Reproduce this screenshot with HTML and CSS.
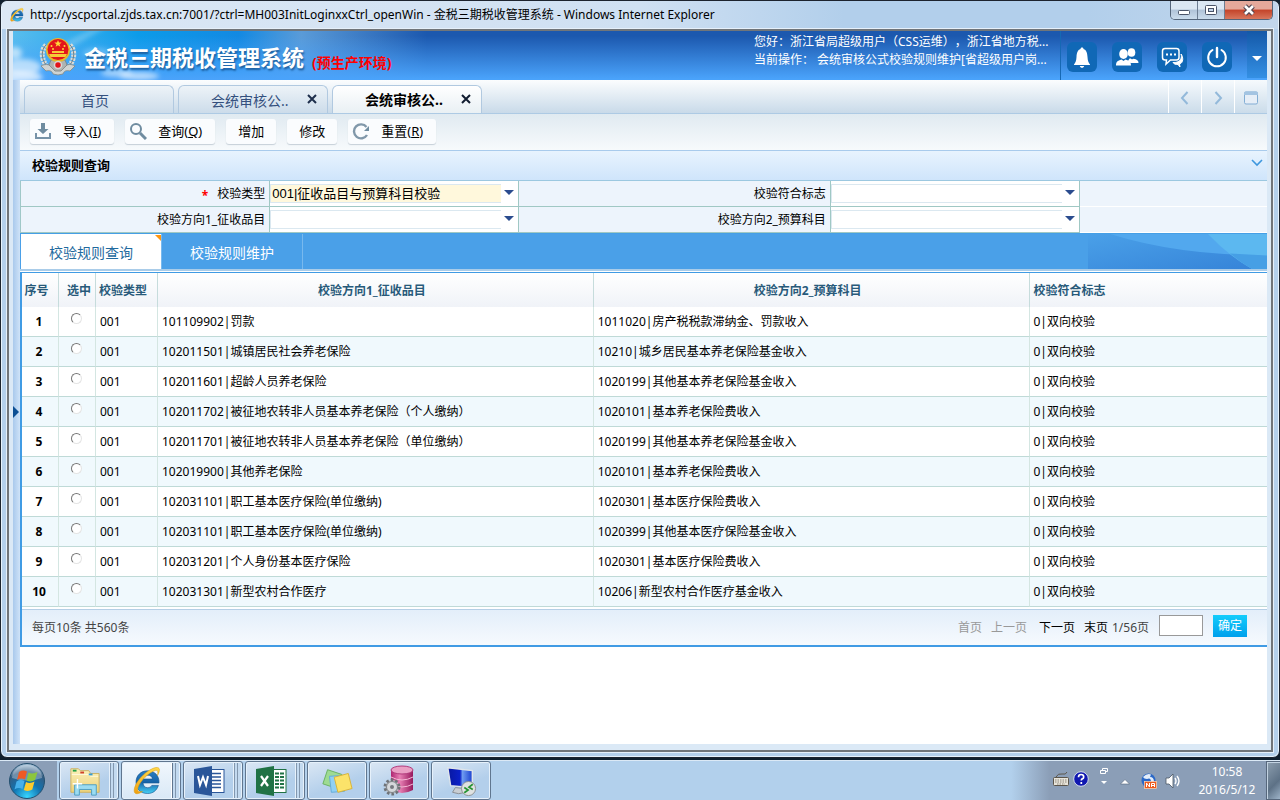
FILE: index.html
```html
<!DOCTYPE html>
<html lang="zh-CN">
<head>
<meta charset="utf-8">
<title>金税三期税收管理系统</title>
<link rel="stylesheet" href="styles.css">
</head>
<body>
<svg class="defs" aria-hidden="true">
  <defs>
    <linearGradient id="ieBlue" x1="0" y1="0" x2="0" y2="1"><stop offset="0" stop-color="#2a7fc4"/><stop offset=".5" stop-color="#1663a8"/><stop offset="1" stop-color="#45d0f5"/></linearGradient>
    <linearGradient id="gold" x1="0" y1="0" x2="0" y2="1"><stop offset="0" stop-color="#ffd94a"/><stop offset="1" stop-color="#f0a010"/></linearGradient>
    <radialGradient id="orb" cx=".5" cy=".95" r=".9"><stop offset="0" stop-color="#37d6ff"/><stop offset=".45" stop-color="#1173b0"/><stop offset=".8" stop-color="#345d83"/><stop offset="1" stop-color="#9db9d1"/></radialGradient>
    <linearGradient id="folder" x1="0" y1="0" x2="0" y2="1"><stop offset="0" stop-color="#fbf0b8"/><stop offset="1" stop-color="#ecd27c"/></linearGradient>
    <linearGradient id="pink" x1="0" y1="0" x2="1" y2="0"><stop offset="0" stop-color="#b02470"/><stop offset=".4" stop-color="#e880b4"/><stop offset="1" stop-color="#96185c"/></linearGradient>
    <linearGradient id="screen" x1="0" y1="0" x2="1" y2="0"><stop offset="0" stop-color="#0818a0"/><stop offset=".5" stop-color="#0a20c8"/><stop offset=".6" stop-color="#6e9bf0"/><stop offset="1" stop-color="#1a40d0"/></linearGradient>
    <symbol id="ie" viewBox="0 0 32 32">
      <path d="M28 18H12c.3 3 2 4.700 4.600 4.700 2 0 3.400-.8 4.200-2.300h6.600C25.800 25.500 22 28.500 16.500 28.500 9.500 28.500 5 24 5 17.200 5 10.500 9.800 5.800 16.600 5.800S28.500 10.500 28 18zM12.200 14h9.300c-.4-2.400-2-3.800-4.600-3.800S12.700 11.600 12.200 14z" fill="url(#ieBlue)" stroke="#0f4f8c" stroke-width=".6"/>
      <path d="M26.500 10.500C29.500 5 29 2 25 2.500 18 3.500 6 14 3.500 23c-1.500 6 2 7.500 8 3.500-4 1-5.500-.5-4.500-4C9 16 18 7.500 24 5.500c2.500-.8 3.500 1 2.500 5z" fill="url(#gold)" stroke="#d99a12" stroke-width=".5"/>
    </symbol>
  </defs>
</svg>

<div class="window">
  <header class="titlebar">
    <svg class="titlebar-icon" aria-hidden="true"><use href="#ie"/></svg>
    <span class="titlebar-text">http://yscportal.zjds.tax.cn:7001/?ctrl=MH003InitLoginxxCtrl_openWin - 金税三期税收管理系统 - Windows Internet Explorer</span>
    <div class="win-controls">
      <button class="win-btn" aria-label="最小化"><svg viewBox="0 0 14 12"><rect x="1.500" y="6.500" width="11" height="4" rx="1" fill="#fff" stroke="#4b5468"/></svg></button>
      <button class="win-btn" aria-label="还原"><svg viewBox="0 0 14 12"><rect x="1.500" y="1.500" width="11" height="9" rx="1" fill="#fff" stroke="#4b5468"/><rect x="4.500" y="4.500" width="5" height="3" fill="#c4d5ea" stroke="#4b5468"/></svg></button>
      <button class="win-btn win-btn-close" aria-label="关闭"><svg viewBox="0 0 14 12"><path d="M3 2l8 8M11 2l-8 8" stroke="#50444e" stroke-width="5"/><path d="M3 2l8 8M11 2l-8 8" stroke="#fff" stroke-width="2.600"/></svg></button>
    </div>
  </header>

  <div class="client">
    <div class="app">
      <div class="banner">
        <svg class="clouds" viewBox="0 0 180 49" aria-hidden="true">
          <defs><filter id="soft"><feGaussianBlur stdDeviation="2.500"/></filter></defs>
          <g fill="#fff" filter="url(#soft)">
            <ellipse cx="2" cy="22" rx="7" ry="6" opacity=".6"/>
            <ellipse cx="10" cy="36" rx="18" ry="8" opacity=".6"/>
            <ellipse cx="4" cy="46" rx="26" ry="6" opacity=".7"/>
            <ellipse cx="66" cy="8" rx="34" ry="3" opacity=".25" transform="rotate(-28 66 8)"/>
            <ellipse cx="104" cy="42" rx="16" ry="4" opacity=".5"/>
            <ellipse cx="126" cy="45" rx="20" ry="4" opacity=".6"/>
            <ellipse cx="84" cy="22" rx="14" ry="5" opacity=".25"/>
          </g>
        </svg>
        <svg class="emblem" viewBox="0 0 38 40" aria-hidden="true">
          <path d="M7 9C2 14 2 22 7 29M31 9c5 5 5 13 0 20" fill="none" stroke="#d9dcda" stroke-width="5" stroke-dasharray="2.500 1"/>
          <path d="M7 9C2 14 2 22 7 29M31 9c5 5 5 13 0 20" fill="none" stroke="#777c7c" stroke-width="1"/>
          <path d="M2 30c5-3 10-1 13 2h8c3-3 8-5 13-2l-5 5c-4-1-6 0-7 3l-5 1-5-1c-1-3-3-4-7-3z" fill="#cfd3d2" stroke="#808887" stroke-width=".8"/>
          <path d="M12 24h14l2 5-6 6h-6l-6-6z" fill="#aeb3b2" stroke="#7c8281" stroke-width=".8"/>
          <circle cx="19" cy="14" r="12" fill="#e5b92c"/><circle cx="19" cy="13.500" r="10.500" fill="#e3151b"/>
          <path d="M19 4l1 2.600h2.700l-2.200 1.600.9 2.600L19 9.200l-2.400 1.600.9-2.600-2.200-1.600H18z" fill="#ffd83a"/>
          <path d="M10 18h18l-1.500 3h-15zM13 15h12v2H13z" fill="#f6cb38"/>
          <g fill="#ffd83a"><circle cx="12.500" cy="10" r="1"/><circle cx="14" cy="13" r="1"/><circle cx="25.500" cy="10" r="1"/><circle cx="24" cy="13" r="1"/></g>
          <circle cx="19" cy="29" r="3.500" fill="#e3151b" stroke="#d8d8d4" stroke-width="1.500"/>
        </svg>
        <h1 class="banner-title">金税三期税收管理系统</h1>
        <span class="banner-env">(预生产环境)</span>
        <div class="banner-user">
          <div>您好：浙江省局超级用户（CSS运维），浙江省地方税...</div>
          <div>当前操作： 会统审核公式校验规则维护[省超级用户岗...</div>
        </div>
        <div class="banner-actions">
          <button class="banner-btn" aria-label="通知"><svg viewBox="0 0 30 30"><path d="M15 5.500c1 0 1.500.7 1.500 1.500 3 1 3.800 4 4 8 .2 4 1 5.500 2.500 7.500v.5H7v-.5C8.500 20.500 9.300 19 9.500 15c.2-4 1-7 4-8 0-.8.5-1.500 1.500-1.500zM12.800 24h4.400c-.3 1.200-1.100 1.800-2.200 1.800s-1.900-.6-2.200-1.800z" fill="#fff"/></svg></button>
          <button class="banner-btn" aria-label="用户"><svg viewBox="0 0 30 30" fill="#fff"><ellipse cx="19.500" cy="10.500" rx="3.800" ry="4.300"/><path d="M16 19l1.500-2.500c2-.5 2 1.500 4 .3 3.500.7 5 1.700 5 4.200h-8z"/><ellipse cx="11.500" cy="12" rx="4.300" ry="5" /><path d="M4 23.500c0-3.800 1.500-4.800 5.500-6l2 1.500 2-1.500c4 1.200 5.500 2.200 5.500 6z"/></svg></button>
          <button class="banner-btn" aria-label="消息"><svg viewBox="0 0 30 30"><path d="M8 6.500h11.500q2.500 0 2.500 2.500v6.500q0 2.500-2.500 2.500h-6L9 22l.5-4H8q-2.500 0-2.500-2.500V9q0-2.500 2.500-2.500z" fill="none" stroke="#fff" stroke-width="1.500"/><path d="M9 12.500h2M13 12.500h2M17 12.500h2" stroke="#fff" stroke-width="2"/><path d="M24 12c1 3 .5 9-8 8.500 1 1.800 3 2 5 2l2 2.500-.5-3c4-1 4-7 1.500-10z" fill="#fff" stroke="#fff"/></svg></button>
          <button class="banner-btn" aria-label="退出"><svg viewBox="0 0 30 30" fill="none" stroke="#fff" stroke-linecap="round"><path d="M10.500 8A8.800 8.800 0 1 0 19.500 8" stroke-width="2"/><path d="M15 6v9" stroke-width="2.400"/></svg></button>
          <button class="banner-more" aria-label="更多"><svg viewBox="0 0 10 6"><path d="M0 0h10L5 5z" fill="#fff"/></svg></button>
        </div>
      </div>

      <div class="workspace">
        <aside class="side-strip"><button class="side-toggle" aria-label="展开菜单"><svg viewBox="0 0 6 14"><path d="M0 1l6 6-6 6z" fill="#0c4f94"/></svg></button></aside>
        <main class="page">
          <nav class="tabbar">
            <div class="tab"><a href="#" class="tab-name">首页</a></div>
            <div class="tab tab-closable"><a href="#" class="tab-name">会统审核公..</a><button class="tab-close" aria-label="关闭标签"><svg viewBox="0 0 10 10"><path d="M1 1l8 8M9 1L1 9" stroke="#1e2f4c" stroke-width="2"/></svg></button></div>
            <div class="tab tab-closable tab-active"><a href="#" class="tab-name">会统审核公..</a><button class="tab-close" aria-label="关闭标签"><svg viewBox="0 0 10 10"><path d="M1 1l8 8M9 1L1 9" stroke="#111d30" stroke-width="2"/></svg></button></div>
            <div class="tabbar-tools">
              <button class="tabbar-tool" aria-label="上一个"><svg viewBox="0 0 16 16"><path d="M10.500 2L5 8l5.500 6" fill="none" stroke="#93b9da" stroke-width="2"/></svg></button>
              <button class="tabbar-tool" aria-label="下一个"><svg viewBox="0 0 16 16"><path d="M5.500 2L11 8l-5.500 6" fill="none" stroke="#93b9da" stroke-width="2"/></svg></button>
              <button class="tabbar-tool" aria-label="窗口"><svg viewBox="0 0 16 16"><rect x="1.500" y="2" width="13" height="12" rx="1.500" fill="#e6eef7" stroke="#82add4"/><path d="M1 5V3q0-1.500 1.500-1.500h11Q15 1.500 15 3v2z" fill="#a3c4e2"/></svg></button>
            </div>
          </nav>

          <div class="toolbar">
            <button class="tool"><svg viewBox="0 0 18 18"><path d="M7 1h4v6h3.500L9 12 3.500 7H7z" fill="#6f8ca0"/><path d="M2 11v5h14v-5" fill="none" stroke="#7793a8" stroke-width="2"/></svg><span>导入(<u>I</u>)</span></button>
            <button class="tool"><svg viewBox="0 0 18 18"><circle cx="7" cy="7" r="5" fill="none" stroke="#6f8ca0" stroke-width="2"/><path d="M11 11l6 6" stroke="#6f8ca0" stroke-width="3"/></svg><span>查询(<u>Q</u>)</span></button>
            <button class="tool tool-plain"><span>增加</span></button>
            <button class="tool tool-plain"><span>修改</span></button>
            <button class="tool"><svg viewBox="0 0 18 18"><path d="M14.500 5A7 7 0 1 0 15 13" fill="none" stroke="#8198aa" stroke-width="2.400"/><path d="M17 4v5h-5z" fill="#6f8ca0"/></svg><span>重置(<u>R</u>)</span></button>
          </div>

          <section class="query">
            <div class="query-head"><h2 class="query-title">校验规则查询</h2><button class="query-fold" aria-label="折叠"><svg viewBox="0 0 12 8"><path d="M1 1l5 5 5-5" fill="none" stroke="#3e97de" stroke-width="1.600"/></svg></button></div>
            <form class="query-form">
              <label class="field-name" for="type"><span class="required">*</span>校验类型</label>
              <div class="field"><select id="type" class="picker picker-filled"><option>001|征收品目与预算科目校验</option></select></div>
              <label class="field-name" for="flag">校验符合标志</label>
              <div class="field"><select id="flag" class="picker"><option></option></select></div>
              <div class="field-rest"></div>
              <label class="field-name" for="dir1">校验方向1_征收品目</label>
              <div class="field"><select id="dir1" class="picker"><option></option></select></div>
              <label class="field-name" for="dir2">校验方向2_预算科目</label>
              <div class="field"><select id="dir2" class="picker"><option></option></select></div>
              <div class="field-rest"></div>
            </form>
          </section>

          <nav class="subtabs">
            <a href="#" class="subtab subtab-active">校验规则查询</a>
            <a href="#" class="subtab">校验规则维护</a>
            <svg class="subtabs-art" viewBox="0 0 179 36" preserveAspectRatio="none" aria-hidden="true"><defs><linearGradient id="wave" x1="0" y1="0" x2="1" y2="1"><stop offset="0" stop-color="#4aa0e8"/><stop offset="1" stop-color="#3583d8"/></linearGradient></defs><rect width="179" height="36" fill="url(#wave)"/><path d="M22 0Q90 22 179 22V0z" fill="#52a8ee"/><path d="M120 0q20 22 44 36h15V0z" fill="#5cb8f0"/><path d="M142 20q10 9 22 16h15V22z" fill="#469fe5"/></svg>
          </nav>

          <section class="result">
            <table class="grid">
              <colgroup><col class="col-no"><col class="col-pick"><col class="col-type"><col class="col-dir"><col class="col-dir"><col></colgroup>
              <thead><tr><th>序号</th><th>选中</th><th>校验类型</th><th>校验方向1_征收品目</th><th>校验方向2_预算科目</th><th class="th-left">校验符合标志</th></tr></thead>
              <tbody>
                <tr><th>1</th><td><input type="radio" name="row" aria-label="第1行"></td><td>001</td><td>101109902|罚款</td><td>1011020|房产税税款滞纳金、罚款收入</td><td>0|双向校验</td></tr>
                <tr><th>2</th><td><input type="radio" name="row" aria-label="第2行"></td><td>001</td><td>102011501|城镇居民社会养老保险</td><td>10210|城乡居民基本养老保险基金收入</td><td>0|双向校验</td></tr>
                <tr><th>3</th><td><input type="radio" name="row" aria-label="第3行"></td><td>001</td><td>102011601|超龄人员养老保险</td><td>1020199|其他基本养老保险基金收入</td><td>0|双向校验</td></tr>
                <tr><th>4</th><td><input type="radio" name="row" aria-label="第4行"></td><td>001</td><td>102011702|被征地农转非人员基本养老保险（个人缴纳）</td><td>1020101|基本养老保险费收入</td><td>0|双向校验</td></tr>
                <tr><th>5</th><td><input type="radio" name="row" aria-label="第5行"></td><td>001</td><td>102011701|被征地农转非人员基本养老保险（单位缴纳）</td><td>1020199|其他基本养老保险基金收入</td><td>0|双向校验</td></tr>
                <tr><th>6</th><td><input type="radio" name="row" aria-label="第6行"></td><td>001</td><td>102019900|其他养老保险</td><td>1020101|基本养老保险费收入</td><td>0|双向校验</td></tr>
                <tr><th>7</th><td><input type="radio" name="row" aria-label="第7行"></td><td>001</td><td>102031101|职工基本医疗保险(单位缴纳)</td><td>1020301|基本医疗保险费收入</td><td>0|双向校验</td></tr>
                <tr><th>8</th><td><input type="radio" name="row" aria-label="第8行"></td><td>001</td><td>102031101|职工基本医疗保险(单位缴纳)</td><td>1020399|其他基本医疗保险基金收入</td><td>0|双向校验</td></tr>
                <tr><th>9</th><td><input type="radio" name="row" aria-label="第9行"></td><td>001</td><td>102031201|个人身份基本医疗保险</td><td>1020301|基本医疗保险费收入</td><td>0|双向校验</td></tr>
                <tr><th>10</th><td><input type="radio" name="row" aria-label="第10行"></td><td>001</td><td>102031301|新型农村合作医疗</td><td>10206|新型农村合作医疗基金收入</td><td>0|双向校验</td></tr>
              </tbody>
            </table>
            <footer class="pager">
              <span class="pager-total">每页10条 共560条</span>
              <a class="pager-link pager-off">首页</a>
              <a class="pager-link pager-off">上一页</a>
              <a href="#" class="pager-link pager-next">下一页</a>
              <a href="#" class="pager-link">末页</a>
              <label class="pager-pos" for="goto">1/56页</label>
              <input class="pager-input" id="goto" type="text">
              <button class="pager-go">确定</button>
            </footer>
          </section>
        </main>
      </div>
    </div>
  </div>
</div>

<footer class="taskbar">
  <div class="start-area"><button class="start" aria-label="开始"><svg viewBox="0 0 38 38"><circle cx="19" cy="19" r="17.500" fill="url(#orb)" stroke="#24506f"/><path d="M4 16a15 13 0 0 1 30 0q-15 5-30 0z" fill="#fff" opacity=".3"/><path d="M11 10q4-2.500 8-.5l-2 8q-4-2-8 .5z" fill="#ee5a24"/><path d="M20.500 10.500q4 2 9-.5l-2.500 8q-4 2.500-8.500.5z" fill="#8cc63e"/><path d="M8.500 19.500q4-2.500 8-.5l-2 8q-4-2-8 .5z" fill="#46b0ea"/><path d="M18 20q4 2 8.500-.5l-2.200 8q-4 2.500-8.500.5z" fill="#fccb2c"/></svg></button></div>
  <button class="task task-stack" aria-label="资源管理器"><svg viewBox="0 0 34 32"><path d="M2 7V3h8l2 2h9l2 3h9v20H2z" fill="url(#folder)" stroke="#cdb060"/><path d="M3 9h18l2 2h8" fill="none" stroke="#fffbe0"/><path d="M4 4h4v2H4z" fill="#25a045"/><path d="M12 6h4v2h-4z" fill="#d0402c"/><path d="M21 8h4v2h-4z" fill="#329bd6"/><path d="M6 31V20h23v11h-5v-6H11v6z" fill="#9bdcf2" stroke="#4c9cc0"/><path d="M9 14v10M4 19h10" stroke="#fff" stroke-width="1.500"/></svg></button>
  <button class="task task-stack task-current" aria-label="Internet Explorer"><svg><use href="#ie"/></svg></button>
  <button class="task task-stack" aria-label="Word"><svg viewBox="0 0 32 32"><rect x="14" y="4.500" width="17" height="23" fill="#fff" stroke="#2a5699"/><path d="M18 8.500h10M18 12h10M18 15.500h10M18 19h10M18 22.500h10" stroke="#2a5699" stroke-width="1.500"/><path d="M1 4l18-3v30L1 28z" fill="#2a5699"/><path d="M5 11l2 9 3-8 3 8 2-9" fill="none" stroke="#fff" stroke-width="2"/></svg></button>
  <button class="task task-stack" aria-label="Excel"><svg viewBox="0 0 32 32"><rect x="14" y="4.500" width="17" height="23" fill="#fff" stroke="#207245"/><path d="M20 8.500h9M20 12h9M20 15.500h9M20 19h9M20 22.500h9" stroke="#207245" stroke-width="2" stroke-dasharray="4 1"/><path d="M1 4l18-3v30L1 28z" fill="#207245"/><path d="M6 11l7 10M13 11L6 21" stroke="#fff" stroke-width="2.200"/></svg></button>
  <button class="task" aria-label="便笺"><svg viewBox="0 0 34 32"><path d="M7 4l15 5-5 15L2 19z" fill="#9edb92" stroke="#68b05e"/><path d="M9 11l15-1 1 17-14 1z" fill="#8fd0f4" stroke="#62aad6"/><path d="M14 12l15-4 4 16-15 4z" fill="#fbe36a" stroke="#d9b236"/></svg></button>
  <button class="task" aria-label="数据库工具"><svg viewBox="0 0 32 32"><path d="M8 5v20q11 6 22 0V5z" fill="url(#pink)"/><ellipse cx="19" cy="5" rx="11" ry="4" fill="#eaa0c4" stroke="#b23a7c"/><path d="M8 12q11 6 22 0M8 19q11 6 22 0" fill="none" stroke="#f4b8d4"/><circle cx="9" cy="22" r="7" fill="#bfc3c7" stroke="#6f7378" stroke-width="3" stroke-dasharray="2.500 2"/><circle cx="9" cy="22" r="5.500" fill="#d5d8db" stroke="#7f8388"/><circle cx="9" cy="22" r="2" fill="#757a80"/></svg></button>
  <button class="task" aria-label="远程桌面"><svg viewBox="0 0 34 32"><path d="M3 2l26 3v18L6 21z" fill="url(#screen)" stroke="#dfe5ea" stroke-width="1.500"/><path d="M11 23l9 1 2 4q-8 3-14 0z" fill="#c9ced3" stroke="#868c92"/><circle cx="25" cy="24" r="7.500" fill="#dfe2e2" stroke="#8b9090"/><path d="M20.500 23l4 2.500-4 3M29.500 19.500l-4 3 4 2.500" fill="none" stroke="#259332" stroke-width="1.800"/></svg></button>
  <div class="tray">
    <svg class="tray-icon" viewBox="0 0 16 16"><path d="M3 6q2-4 6-3t5-2" fill="none" stroke="#5c564c"/><rect x=".5" y="6.500" width="15" height="8" rx="1" fill="#e8e4da" stroke="#5c564c"/><path d="M2 9h12M2 11h12M4 13h8" stroke="#8a857a" stroke-dasharray="1.500 1"/></svg>
    <svg class="tray-icon" viewBox="0 0 16 16"><circle cx="8" cy="8" r="7.300" fill="#1018b0" stroke="#d3dcec"/><path d="M5.500 6.300q0-2.800 2.600-2.800t2.600 2.400q0 1.400-1.500 2-.9.400-.9 1.600M8.300 11v2" fill="none" stroke="#fff" stroke-width="1.700"/></svg>
    <svg class="tray-tall" viewBox="0 0 10 20"><path d="M3.500 3V1.500h5v3H7M1.500 3.500h5v3h-5z" fill="none" stroke="#fff"/><path d="M2 14h6l-3 3z" fill="#fff"/></svg>
    <svg class="tray-icon tray-low" viewBox="0 0 16 16"><path d="M3.500 11L8 6.500l4.500 4.500z" fill="#fff" stroke="#56677c" stroke-width=".6"/></svg>
    <svg class="tray-icon tray-low" viewBox="0 0 16 16"><circle cx="7.500" cy="7.500" r="7" fill="#2a68c8"/><path d="M2 4q4-4 8-2.500L9 4q4 0 4 5h-3q0-5-4-3-3 0-4-2z" fill="#e4eefa"/><rect x="3.500" y="8.500" width="12" height="7" fill="#ee5a1c" stroke="#ffd9b8" stroke-width=".7"/><path d="M5.500 14v-4l3 4v-4M10.500 14v-3.500h3V14M10.500 12.500h3" fill="none" stroke="#fff"/></svg>
    <svg class="tray-icon tray-low" viewBox="0 0 16 16"><path d="M1 5h3l4-4v14l-4-4H1z" fill="#fff" stroke="#4a5563" stroke-width=".8"/><path d="M10 5q2 3 0 6M12 3q4 5 0 10" fill="none" stroke="#fff" stroke-width="1.400"/></svg>
    <div class="clock"><div>10:58</div><div>2016/5/12</div></div>
  </div>
  <button class="show-desktop" aria-label="显示桌面"></button>
</footer>
</body>
</html>
```
FILE: styles.css
```css
* { box-sizing: border-box; }

body {
  margin: 0;
  min-height: 100vh;
  display: flex;
  flex-direction: column;
  background: #10202f;
  color: #000;
  font: 12px/18px "Noto Sans", "Noto Sans CJK SC", sans-serif;
  text-spacing-trim: space-all;
}

button {
  margin: 0;
  padding: 0;
  border: 0;
  background: none;
  color: inherit;
  font: inherit;
  display: flex;
  align-items: center;
  justify-content: center;
}

a { color: inherit; text-decoration: none; }
svg { display: block; flex: none; }
.defs { position: absolute; width: 0; height: 0; }

/* Window frame */
.window {
  flex: 1;
  display: flex;
  flex-direction: column;
  margin-bottom: 2px;
  padding: 0 5px 5px;
  border: 1px solid #1c232e;
  border-radius: 7px;
  background: #b4d0ec;
  box-shadow: inset 0 0 0 1px #e6f2fc;
}

.titlebar {
  height: 28px;
  display: flex;
  align-items: center;
  gap: 5px;
  margin: 0 -4px;
  padding-left: 7px;
  border-radius: 6px 6px 0 0;
  background: linear-gradient(90deg, #dce8f5 0, #cfe0f2 50%, #b2cfeb 66%, #b2cfeb 85%, #c2d6ec 100%);
}
.titlebar-icon { width: 16px; height: 16px; }
.titlebar-text { flex: 1; white-space: nowrap; overflow: hidden; }
.win-controls {
  display: flex;
  align-self: flex-start;
  margin-right: 5px;
  border: 1px solid #54657a;
  border-top: 0;
  border-radius: 0 0 5px 5px;
  overflow: hidden;
}
.win-btn {
  width: 27px;
  height: 18px;
  border-right: 1px solid #6c7d92;
  background: linear-gradient(#dbe7f3 45%, #b0c3d8 50%, #cbdcec);
}
.win-btn svg { width: 14px; height: 12px; }
.win-btn-close {
  width: 47px;
  border-right: 0;
  background: linear-gradient(#e5a99b 45%, #c4442a 50%, #d8765c);
}

.client {
  flex: 1;
  display: flex;
  margin: 0 1px;
  padding: 0 4px 6px;
  border: 2px solid #70757a;
  box-shadow: 0 0 0 1px #e6f0fa;
  background: #dbe9f6;
}
.app { flex: 1; min-width: 0; display: flex; flex-direction: column; }

/* Banner */
.banner {
  position: relative;
  height: 49px;
  display: flex;
  align-items: center;
  padding-left: 26px;
  background:
    linear-gradient(rgba(70, 160, 250, 0) 10%, rgba(74, 163, 251, 1) 98%),
    linear-gradient(90deg, #58bdee 0, #0c9be9 10%, #1389e2 18%, #5a9bd8 23%, #1c58ae 33%, #1c58ae 100%);
  color: #fff;
}
.clouds { position: absolute; left: 0; top: 0; width: 180px; height: 49px; overflow: hidden; }
.emblem { position: relative; width: 38px; height: 40px; }
.banner-title {
  position: relative;
  margin: 0 8px 0 7px;
  padding-top: 2px;
  font-size: 22px;
  line-height: 32px;
  font-weight: 700;
  white-space: nowrap;
  text-shadow: 1px 2px 2px #1c5d9c;
}
.banner-env {
  padding-top: 14px;
  color: #f00;
  font-size: 14px;
  font-weight: 700;
  white-space: nowrap;
}
.banner-user {
  margin-left: auto;
  width: 306px;
  margin-bottom: 10px;
  white-space: nowrap;
  overflow: hidden;
}
.banner-actions {
  display: flex;
  align-items: center;
  align-self: stretch;
  gap: 15px;
  padding-left: 6px;
  border-left: 1px solid #1668b4;
}
.banner-btn { width: 30px; height: 30px; margin-top: 2px; border-radius: 6px; background: #1068b6; }
.banner-btn svg { width: 30px; height: 30px; }
.banner-more { width: 20px; height: 47px; align-self: flex-start; padding-top: 8px; background: linear-gradient(#1458a8, #3490e4); }
.banner-more svg { width: 10px; height: 6px; }

/* Workspace */
.workspace { flex: 1; display: flex; }
.side-strip {
  width: 7px;
  display: flex;
  align-items: center;
  background: linear-gradient(90deg, #a9c9ec, #cfe3f8);
}
.side-toggle svg { width: 6px; height: 14px; }
.page { flex: 1; min-width: 0; background: #fff; }

.tabbar {
  height: 34px;
  display: flex;
  align-items: flex-end;
  gap: 4px;
  padding-left: 4px;
  border-bottom: 1px solid #adcae4;
  background: linear-gradient(#fbfdfe, #c9dae9);
}
.tab {
  width: 150px;
  height: 28px;
  display: flex;
  align-items: center;
  justify-content: center;
  border: 1px solid #b1c9e0;
  border-bottom: 0;
  border-radius: 6px 6px 0 0;
  background: linear-gradient(#edf3f8, #ccdcea);
  color: #34507e;
  font-size: 14px;
  line-height: 20px;
}
.tab-name { padding-right: 8px; padding-top: 2px; }
.tab-closable { justify-content: space-between; padding: 0 10px 0 32px; }
.tab-closable .tab-name { padding-right: 0; }
.tab-close { padding-bottom: 2px; }
.tab-close svg { width: 10px; height: 10px; }
.tab-active { background: linear-gradient(#fff, #e9f0f4); color: #000; font-weight: 700; }
.tab-active .tab-name { padding-top: 0; }
.tabbar-tools { margin-left: auto; align-self: stretch; display: flex; }
.tabbar-tool {
  width: 33px;
  padding-top: 2px;
  border-left: 1px solid #fff;
  background: linear-gradient(#f6fafd, #cbdcea);
}
.tabbar-tool svg { width: 16px; height: 16px; }

.toolbar {
  height: 36px;
  display: flex;
  align-items: center;
  gap: 11px;
  padding: 0 0 2px 10px;
  background: linear-gradient(#e0eaf1, #f7fafc);
}
.tool {
  height: 25px;
  gap: 11px;
  padding: 0 13px 0 4px;
  border-radius: 3px;
  background: #fafcfe;
  box-shadow: 0 1px 1px #c6cfd8;
  font-size: 13px;
}
.tool-plain { padding: 0 12px; }
.tool svg { width: 18px; height: 18px; }

/* Query panel */
.query-head {
  height: 31px;
  display: flex;
  align-items: center;
  justify-content: space-between;
  padding: 0 4px 2px 12px;
  border-top: 1px solid #a9cbec;
  border-bottom: 1px solid #9cc8e0;
  background: linear-gradient(#e8f3fe, #cfe5fb);
}
.query-title { margin: 0; font-size: 13px; line-height: 18px; font-weight: 700; }
.query-fold { padding-bottom: 4px; }
.query-fold svg { width: 12px; height: 8px; }

.query-form {
  display: grid;
  grid-template-columns: 20% 20% 25% 20% 1fr;
  grid-auto-rows: 26px;
  border-left: 1px solid #a0c8c8;
}
.field-name, .field, .field-rest { border-bottom: 1px solid #a0c8c4; }
.field-name {
  display: flex;
  align-items: center;
  justify-content: flex-end;
  padding-right: 4px;
  border-right: 1px solid #a0c8c4;
  background: #edf4fc;
}
.required { margin-right: 9px; padding-top: 4px; color: #f00; font-weight: 700; }
.field { position: relative; display: flex; align-items: center; padding: 0 17px 0 0; border-right: 1px solid #a0c8c4; }
.field::after {
  content: "";
  position: absolute;
  right: 4px;
  top: 9px;
  border: 5px solid transparent;
  border-top-color: #2b4c8e;
  border-bottom: 0;
  pointer-events: none;
}
.field-rest { border-color: #fff; background: #edf4fc; }
.picker {
  width: 100%;
  height: 19px;
  margin: 0;
  padding: 0 0 0 1px;
  appearance: none;
  border: 1px solid #dbe8f0;
  border-right: 0;
  border-radius: 0;
  background: #fff;
  color: #000;
  font: 13px/17px "Liberation Sans", "Noto Sans CJK SC", sans-serif;
}
.picker-filled { background: #fff8dc; }

/* Sub tabs */
.subtabs {
  position: relative;
  height: 38px;
  display: flex;
  padding-left: 1px;
  border-top: 1px solid #459fe6;
  border-bottom: 2px solid #a9cce9;
  background: #4aa0e8;
  color: #fff;
}
.subtab {
  position: relative;
  width: 141px;
  display: flex;
  align-items: center;
  justify-content: center;
  padding-top: 2px;
  border-right: 1px solid #78b9ee;
  font-size: 14px;
  line-height: 20px;
}
.subtab-active { background: #fff; color: #1f6a9e; }
.subtab-active::after {
  content: "";
  position: absolute;
  right: 0;
  top: 1px;
  border-top: 6px solid #ff9610;
  border-left: 6px solid transparent;
}
.subtabs-art { width: 179px; height: 35px; margin-left: auto; }

/* Result grid */
.result { margin-top: 1px; border: solid #409be4; border-width: 1px 0 2px 2px; }
.grid { width: 100%; table-layout: fixed; border-collapse: separate; border-spacing: 0; }
.col-no, .col-pick { width: 37px; }
.col-type { width: 62px; }
.col-dir { width: 35%; }
.grid th, .grid td {
  height: 30px;
  padding: 0 4px;
  border-right: 1px solid #d4e6e2;
  border-bottom: 1px solid #bfdad7;
  text-align: left;
  white-space: nowrap;
}
.grid th:last-child, .grid td:last-child { border-right: 0; }
.grid thead th {
  height: 34px;
  padding: 2px 7px 0 0;
  border-bottom: 0;
  border-right-color: #c6dcdc;
  background: linear-gradient(#fff, #f0f3f8);
  color: #285a7a;
  text-align: center;
}
.grid thead th:nth-child(2) { padding: 2px 0 0 4px; }
.grid thead .th-left { padding-left: 4px; text-align: left; }
.grid tbody th { padding: 0 2px 0 0; text-align: center; }
.grid tbody tr:nth-child(even) { background: #f0f9fd; }
.grid input {
  display: block;
  width: 11px;
  height: 11px;
  margin: 0 auto 6px 8px;
  appearance: none;
  border: 1px solid #777;
  border-right-color: #e4e4e4;
  border-bottom-color: #e4e4e4;
  border-radius: 50%;
  background: #fff;
}

.pager {
  height: 36px;
  margin-top: 2px;
  display: flex;
  align-items: center;
  padding: 0 20px 0 10px;
  border-top: 1px solid #b5cfe6;
  background: linear-gradient(#e3eefa, #f6fafe);
}
.pager-total { margin-right: auto; color: #444; }
.pager-link { margin-left: 9px; }
.pager-off { color: #999; }
.pager-next { margin-left: 12px; }
.pager-pos { margin: 0 10px 0 4px; color: #444; }
.pager-input { width: 44px; height: 21px; margin: 0 10px 4px 0; padding: 0 2px; border: 1px solid #999; background: #fff; font: inherit; }
.pager-go { width: 34px; height: 22px; margin-bottom: 4px; background: linear-gradient(#14cdfc, #00a0ec); color: #fff; }

/* Taskbar */
.taskbar {
  height: 40px;
  display: flex;
  gap: 2px;
  border-top: 1px solid #dbe9f6;
  background: linear-gradient(90deg, #b2d0ec 0, #b2d0ec 79%, #8b9eb7 82%, #8b9eb7 100%);
}
.start-area { width: 57px; display: flex; padding-left: 8px; background: #8b9eb7; }
.start svg { width: 38px; height: 38px; }
.task {
  width: 60px;
  border: 1px solid #60768f;
  border-radius: 3px;
  background: linear-gradient(160deg, #dbe7f4, #b3cfeb 60%);
  box-shadow: inset 0 0 0 1px #e6f1fb;
}
.task svg { width: 32px; height: 32px; }
.task-stack {
  padding-right: 9px;
  background:
    linear-gradient(90deg, #e6f1fb 1px, #8297ae 1px 2px, #c3daf0 2px 4px, #8297ae 4px 5px, #c3daf0 5px) right / 9px 100% no-repeat,
    linear-gradient(160deg, #dbe7f4, #b3cfeb 60%);
}
.task-current {
  background:
    linear-gradient(90deg, #fff 1px, #60768f 1px 2px, #c3daf0 2px 4px, #8297ae 4px 5px, #c3daf0 5px) right / 9px 100% no-repeat,
    linear-gradient(#f1f7fd, #d9e8f6);
}
.tray { margin-left: auto; display: flex; align-items: center; gap: 4px; }
.tray-icon { width: 16px; height: 16px; margin-bottom: 4px; }
.tray-low { margin-bottom: 0; margin-left: 4px; }
.tray-tall { width: 10px; height: 20px; margin: 0 0 8px 6px; }
.clock { width: 68px; margin: 0 3px 0 8px; text-align: center; color: #fff; }
.show-desktop { width: 14px; border: 1px solid #56677c; border-right: 0; background: linear-gradient(135deg, #8d9eaf, #5d7186 60%, #9db3c8); box-shadow: inset 1px 1px 0 #c2d2e1; }
```
